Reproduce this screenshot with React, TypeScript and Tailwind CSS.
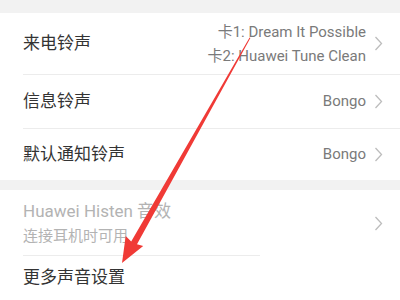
import React from "react";

const font = { fontFamily: 'Roboto, "Noto Sans CJK SC", sans-serif' };

function Chevron() {
  return (
    <svg width="9" height="15" viewBox="0 0 9 15" className="shrink-0">
      <path d="M1.5 1 L7.5 7.5 L1.5 14" fill="none" stroke="#bdbdbd" strokeWidth="1.3" />
    </svg>
  );
}

export default function App() {
  return (
    <div className="relative w-[400px] h-[300px] overflow-hidden bg-white" style={font}>
      <div className="h-[13px] bg-[#f2f2f2]" />
      <div className="pl-[23px]">
        <div className="h-[62px] flex items-center justify-between pr-[17px] border-b border-[#ececec]">
          <span className="text-[17px] text-[#333]">来电铃声</span>
          <div className="flex items-center gap-[8px]">
            <div className="flex flex-col items-end text-[15px] leading-[24px] text-[#7a7a7a]">
              <span>卡1: Dream It Possible</span>
              <span>卡2: Huawei Tune Clean</span>
            </div>
            <Chevron />
          </div>
        </div>
        <div className="h-[54px] flex items-center justify-between pr-[17px] border-b border-[#ececec]">
          <span className="text-[17px] text-[#333]">信息铃声</span>
          <div className="flex items-center gap-[8px]">
            <span className="text-[15px] text-[#7a7a7a]">Bongo</span>
            <Chevron />
          </div>
        </div>
        <div className="h-[51px] flex items-center justify-between pr-[17px]">
          <span className="text-[17px] text-[#333]">默认通知铃声</span>
          <div className="flex items-center gap-[8px]">
            <span className="text-[15px] text-[#7a7a7a]">Bongo</span>
            <Chevron />
          </div>
        </div>
      </div>
      <div className="h-[10px] bg-[#f2f2f2]" />
      <div className="pl-[23px]">
        <div className="relative h-[66px] flex items-center justify-between pr-[17px]">
          <div className="flex flex-col">
            <span className="text-[17px] leading-[25px] text-[#b3b3b3]">Huawei Histen 音效</span>
            <span className="text-[15px] leading-[24px] text-[#b3b3b3]">连接耳机时可用</span>
          </div>
          <Chevron />
          <div className="absolute left-0 bottom-0 w-[237px] h-px bg-[#ececec]" />
        </div>
        <div className="h-[44px] flex items-center">
          <span className="text-[17px] text-[#333]">更多声音设置</span>
        </div>
      </div>
      <svg className="absolute left-0 top-0" width="400" height="300" viewBox="0 0 400 300">
        <polygon
          points="250.4,38 249.6,37.6 131.2,241.5 125.7,236 122,263 143.2,246 137,244.3"
          fill="#f03a36"
        />
      </svg>
    </div>
  );
}
